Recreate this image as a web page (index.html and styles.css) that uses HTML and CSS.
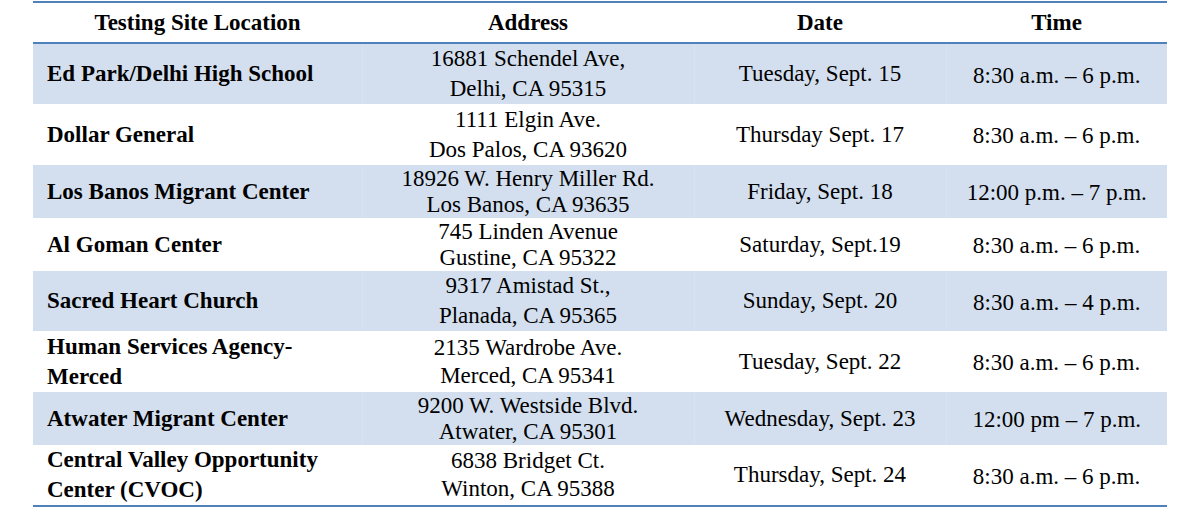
FILE: index.html
```html
<!DOCTYPE html>
<html>
<head>
<meta charset="utf-8">
<link rel="stylesheet" href="styles.css">
</head>
<body>
<table class="sites">
  <colgroup>
    <col class="c-site"><col class="c-addr"><col class="c-date"><col class="c-time">
  </colgroup>
  <thead>
    <tr class="head">
      <th>Testing Site Location</th>
      <th>Address</th>
      <th>Date</th>
      <th>Time</th>
    </tr>
  </thead>
  <tbody>
    <tr class="band h60 wide">
      <td class="site">Ed Park/Delhi High School</td>
      <td class="addr">16881 Schendel Ave,<br>Delhi, CA 95315</td>
      <td class="date">Tuesday, Sept. 15</td>
      <td class="time">8:30 a.m. – 6 p.m.</td>
    </tr>
    <tr class="h61 wide">
      <td class="site">Dollar General</td>
      <td class="addr">1111 Elgin Ave.<br>Dos Palos, CA 93620</td>
      <td class="date">Thursday Sept. 17</td>
      <td class="time">8:30 a.m. – 6 p.m.</td>
    </tr>
    <tr class="band h53 narrow">
      <td class="site">Los Banos Migrant Center</td>
      <td class="addr">18926 W. Henry Miller Rd.<br>Los Banos, CA 93635</td>
      <td class="date">Friday, Sept. 18</td>
      <td class="time">12:00 p.m. – 7 p.m.</td>
    </tr>
    <tr class="h53 narrow">
      <td class="site">Al Goman Center</td>
      <td class="addr">745 Linden Avenue<br>Gustine, CA 95322</td>
      <td class="date">Saturday, Sept.19</td>
      <td class="time">8:30 a.m. – 6 p.m.</td>
    </tr>
    <tr class="band h60 wide">
      <td class="site">Sacred Heart Church</td>
      <td class="addr">9317 Amistad St.,<br>Planada, CA 95365</td>
      <td class="date">Sunday, Sept. 20</td>
      <td class="time">8:30 a.m. – 4 p.m.</td>
    </tr>
    <tr class="h61 wide mixed">
      <td class="site">Human Services Agency-<br>Merced</td>
      <td class="addr">2135 Wardrobe Ave.<br>Merced, CA 95341</td>
      <td class="date">Tuesday, Sept. 22</td>
      <td class="time">8:30 a.m. – 6 p.m.</td>
    </tr>
    <tr class="band h53 narrow">
      <td class="site">Atwater Migrant Center</td>
      <td class="addr">9200 W. Westside Blvd.<br>Atwater, CA 95301</td>
      <td class="date">Wednesday, Sept. 23</td>
      <td class="time">12:00 pm – 7 p.m.</td>
    </tr>
    <tr class="h60 wide mixed last">
      <td class="site">Central Valley Opportunity<br>Center (CVOC)</td>
      <td class="addr">6838 Bridget Ct.<br>Winton, CA 95388</td>
      <td class="date">Thursday, Sept. 24</td>
      <td class="time">8:30 a.m. – 6 p.m.</td>
    </tr>
  </tbody>
</table>
</body>
</html>
```

FILE: styles.css
```css
html, body {
  margin: 0;
  padding: 0;
  background: #ffffff;
}

body {
  padding: 1px 0 0 33px;
  font-family: "Liberation Serif", "Times New Roman", serif;
  color: #000000;
}

.sites {
  border-collapse: collapse;
  table-layout: fixed;
  width: 1134px;
  border-top: 2px solid #4f81bd;
  border-bottom: 2px solid #4f81bd;
}

.c-site { width: 329px; }
.c-addr { width: 332px; }
.c-date { width: 252px; }
.c-time { width: 221px; }

th, td {
  box-sizing: border-box;
  padding: 0;
  vertical-align: middle;
  text-align: center;
  font-size: 23px;
}

.head th {
  height: 41px;
  font-weight: bold;
  line-height: 26px;
  border-bottom: 2px solid #4f81bd;
}

.band td {
  background: #d3dfee;
}

.band td + td {
  border-left: 1px solid #d8e3f0;
}

.h60 td { height: 60px; }
.h61 td { height: 61px; }
.h53 td { height: 53px; }

.wide td { line-height: 30px; }
.narrow td { line-height: 26px; }
.mixed .addr { line-height: 28px; }

td.site {
  text-align: left;
  padding-left: 14px;
  font-weight: bold;
  line-height: 30px;
}

td.time {
  padding-top: 3px;
}
```
